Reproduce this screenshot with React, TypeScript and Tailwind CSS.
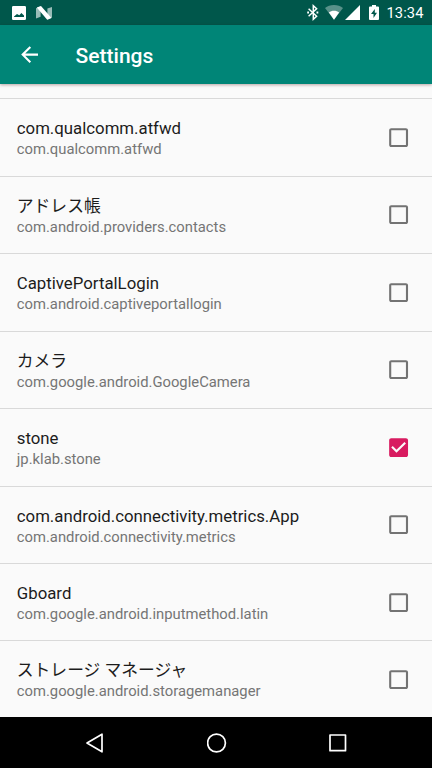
type AppEntry = { name: string; pkg: string; checked?: boolean };

const apps: AppEntry[] = [
  { name: "com.qualcomm.atfwd", pkg: "com.qualcomm.atfwd" },
  { name: "アドレス帳", pkg: "com.android.providers.contacts" },
  { name: "CaptivePortalLogin", pkg: "com.android.captiveportallogin" },
  { name: "カメラ", pkg: "com.google.android.GoogleCamera" },
  { name: "stone", pkg: "jp.klab.stone", checked: true },
  { name: "com.android.connectivity.metrics.App", pkg: "com.android.connectivity.metrics" },
  { name: "Gboard", pkg: "com.google.android.inputmethod.latin" },
  { name: "ストレージ マネージャ", pkg: "com.google.android.storagemanager" },
];

function StatusBar() {
  return (
    <div className="flex h-[25px] shrink-0 items-center bg-[#00574b] pl-[12px] pr-[8.5px] text-white">
      <svg className="h-[14px] w-[14px]" viewBox="0 0 14 14" fill="currentColor">
        <path
          fillRule="evenodd"
          d="M1.3 0h11.4A1.3 1.3 0 0 1 14 1.3v11.4a1.3 1.3 0 0 1-1.3 1.3H1.3A1.3 1.3 0 0 1 0 12.7V1.3A1.3 1.3 0 0 1 1.3 0zM2 11h10V9.600L9.400 7 7.300 9.300 5 7.900 2 10.4z"
        />
      </svg>
      <svg className="ml-[10px] h-[14px] w-[16px]" viewBox="0 0 16 14" fill="currentColor">
        <path opacity=".6" d="M0 2.300 4.6.3v10.500L0 12.5zM11.4 2.600 16 1v10.500L11.4 13.700z" />
        <path d="M.8 1.500 5 0 15.500 12 11.2 13.8z" />
      </svg>
      <div className="flex-1" />
      <svg className="h-[17px] w-[16px]" viewBox="0 0 16 17" fill="none" stroke="currentColor" strokeWidth="1.500">
        <path d="M3.600 4.800 11.600 12.200 8.300 15.200V1.800l3.300 3-8 7.400" />
        <path d="M2.200 8.500h1.800M11.500 8.500h1.800" strokeWidth="1.800" />
      </svg>
      <svg className="ml-[3.500px] h-[15px] w-[18px]" viewBox="0 0 18 15" fill="currentColor">
        <path opacity=".35" d="M9 0C5.4 0 2.4 1.2 0 3.1L9 14.7l9-11.6C15.6 1.2 12.6 0 9 0z" />
        <path d="M9 5.8c-2 0-3.7.6-5.1 1.7L9 14.7l5.1-7.2C12.7 6.4 11 5.8 9 5.8z" />
      </svg>
      <svg className="ml-[2px] h-[15px] w-[15px]" viewBox="0 0 15 15" fill="currentColor">
        <path d="M15 0v15H0z" />
      </svg>
      <svg className="ml-[9px] h-[15px] w-[10px]" viewBox="0 0 10 15" fill="currentColor">
        <path
          fillRule="evenodd"
          d="M3 0h4v1.5h2a1 1 0 0 1 1 1V14a1 1 0 0 1-1 1H1a1 1 0 0 1-1-1V2.500a1 1 0 0 1 1-1h2zM5.800 4 2 9h2.500v4L8 7.800H5.800z"
        />
      </svg>
      <span className="ml-[7.500px] pt-px text-[14.7px] leading-[20px] tracking-[0.1px]">13:34</span>
    </div>
  );
}

function Toolbar() {
  return (
    <header className="z-10 flex h-[59px] shrink-0 items-center bg-[#008577] pl-[17px] text-white shadow-[0_1px_3px_rgba(60,0,0,0.35)]">
      <svg className="h-[25.2px] w-[25.2px]" viewBox="0 0 24 24" fill="currentColor">
        <path d="M20 11H7.830l5.590-5.590L12 4l-8 8 8 8 1.410-1.410L7.830 13H20v-2z" />
      </svg>
      <h1 className="ml-[33.4px] pt-[2px] text-[21px] font-medium leading-[28px]">Settings</h1>
    </header>
  );
}

function Checkbox({ checked }: { checked?: boolean }) {
  return (
    <svg
      className={checked ? "h-[25.2px] w-[25.2px] text-[#d81b60]" : "h-[25.2px] w-[25.2px] text-[#737373]"}
      viewBox="0 0 24 24"
      fill="currentColor"
      role="checkbox"
      aria-checked={!!checked}
    >
      {checked ? (
        <path d="M19 3H5c-1.110 0-2 .9-2 2v14c0 1.100.89 2 2 2h14c1.110 0 2-.9 2-2V5c0-1.100-.89-2-2-2zm-9 14-5-5 1.410-1.410L10 14.170l7.590-7.590L19 8l-9 9z" />
      ) : (
        <path d="M19 5v14H5V5h14m0-2H5c-1.100 0-2 .9-2 2v14c0 1.100.9 2 2 2h14c1.100 0 2-.9 2-2V5c0-1.100-.9-2-2-2z" />
      )}
    </svg>
  );
}

function Row({ app }: { app: AppEntry }) {
  return (
    <li className="flex h-[77.450px] items-center justify-between border-t border-[#d9d9d9] pl-[16.8px] pr-[21px]">
      <div className="pt-[1.600px]">
        <div className="h-[22px] whitespace-pre text-[16.8px] leading-[22px] text-[#1c1c1c]">{app.name}</div>
        <div className="h-[20px] text-[14.8px] leading-[20px] text-[#757575]">{app.pkg}</div>
      </div>
      <Checkbox checked={app.checked} />
    </li>
  );
}

function NavBar() {
  return (
    <nav className="flex h-[51px] shrink-0 items-center justify-between bg-black pl-[85px] pr-[84px] text-white">
      <svg className="h-[20px] w-[20px]" viewBox="0 0 20 20" fill="none" stroke="currentColor" strokeWidth="1.7" strokeLinejoin="round">
        <path d="M17 1.200v17.600L2 10z" />
      </svg>
      <svg className="h-[20px] w-[20px]" viewBox="0 0 20 20" fill="none" stroke="currentColor" strokeWidth="1.700">
        <circle cx="9.500" cy="10" r="8.900" />
      </svg>
      <svg className="h-[20px] w-[20px]" viewBox="0 0 20 20" fill="none" stroke="currentColor" strokeWidth="1.700" strokeLinejoin="round">
        <rect x="2" y="2" width="15.500" height="15.700" />
      </svg>
    </nav>
  );
}

export default function App() {
  return (
    <div className="flex h-[768px] w-[432px] flex-col overflow-hidden bg-[#fafafa] font-['Roboto','Noto_Sans_CJK_JP',sans-serif]">
      <StatusBar />
      <Toolbar />
      <ul className="min-h-0 flex-1 overflow-hidden pt-[14.400px]">
        {apps.map((app) => (
          <Row key={app.pkg} app={app} />
        ))}
      </ul>
      <NavBar />
    </div>
  );
}
